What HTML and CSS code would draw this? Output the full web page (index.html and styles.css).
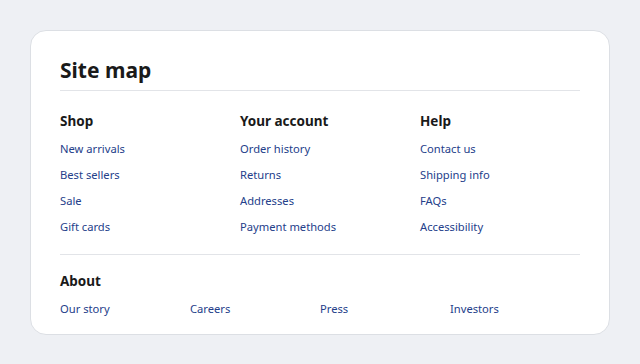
FILE: index.html
```html
<!DOCTYPE html>
<html lang="en">
    <head>
        <meta charset="utf-8">
        <title>Site map</title>
        <link rel="stylesheet" href="styles.css">
    </head>
    <body>
        <main class="card">
            <h1>Site map</h1>

            <div class="cols">
                <section>
                    <h2>Shop</h2>
                    <ul>
                        <li><a href="#">New arrivals</a></li>
                        <li><a href="#">Best sellers</a></li>
                        <li><a href="#">Sale</a></li>
                        <li><a href="#">Gift cards</a></li>
                    </ul>
                </section>
                <section>
                    <h2>Your account</h2>
                    <ul>
                        <li><a href="#">Order history</a></li>
                        <li><a href="#">Returns</a></li>
                        <li><a href="#">Addresses</a></li>
                        <li><a href="#">Payment methods</a></li>
                    </ul>
                </section>
                <section>
                    <h2>Help</h2>
                    <ul>
                        <li><a href="#">Contact us</a></li>
                        <li><a href="#">Shipping info</a></li>
                        <li><a href="#">FAQs</a></li>
                        <li><a href="#">Accessibility</a></li>
                    </ul>
                </section>
            </div>

            <section class="about">
                <h2>About</h2>
                <ul class="row">
                    <li><a href="#">Our story</a></li>
                    <li><a href="#">Careers</a></li>
                    <li><a href="#">Press</a></li>
                    <li><a href="#">Investors</a></li>
                </ul>
            </section>
        </main>
    </body>
</html>
```

FILE: styles.css
```css
body {
    margin: 0;
    padding: 30px;
    background: #eef0f4;
    font-family: "Noto Sans", sans-serif;
    color: #1a1a1a;
}

.card {
    background: #fff;
    border: 1px solid #dcdfe4;
    border-radius: 16px;
    padding: 22px 29px 16px;
}

h1 {
    margin: 0;
    padding-bottom: 3px;
    border-bottom: 1px solid #e2e4e8;
    font-size: 21px;
    line-height: 34px;
}

h2 {
    margin: 0;
    font-size: 13.5px;
    line-height: 20px;
}

ul {
    list-style: none;
    margin: 0;
    padding: 0;
}

li {
    font-size: 11.2px;
    line-height: 18px;
}

a {
    color: #24408a;
    text-decoration: none;
}

.cols {
    display: grid;
    grid-template-columns: repeat(3, 1fr);
    column-gap: 20px;
    padding: 20px 0 18px;
    border-bottom: 1px solid #e2e4e8;
}

.cols ul {
    display: grid;
    gap: 8px;
    margin-top: 9px;
}

.about {
    padding-top: 16px;
}

.row {
    display: grid;
    grid-template-columns: repeat(4, 1fr);
    margin-top: 9px;
}
```
